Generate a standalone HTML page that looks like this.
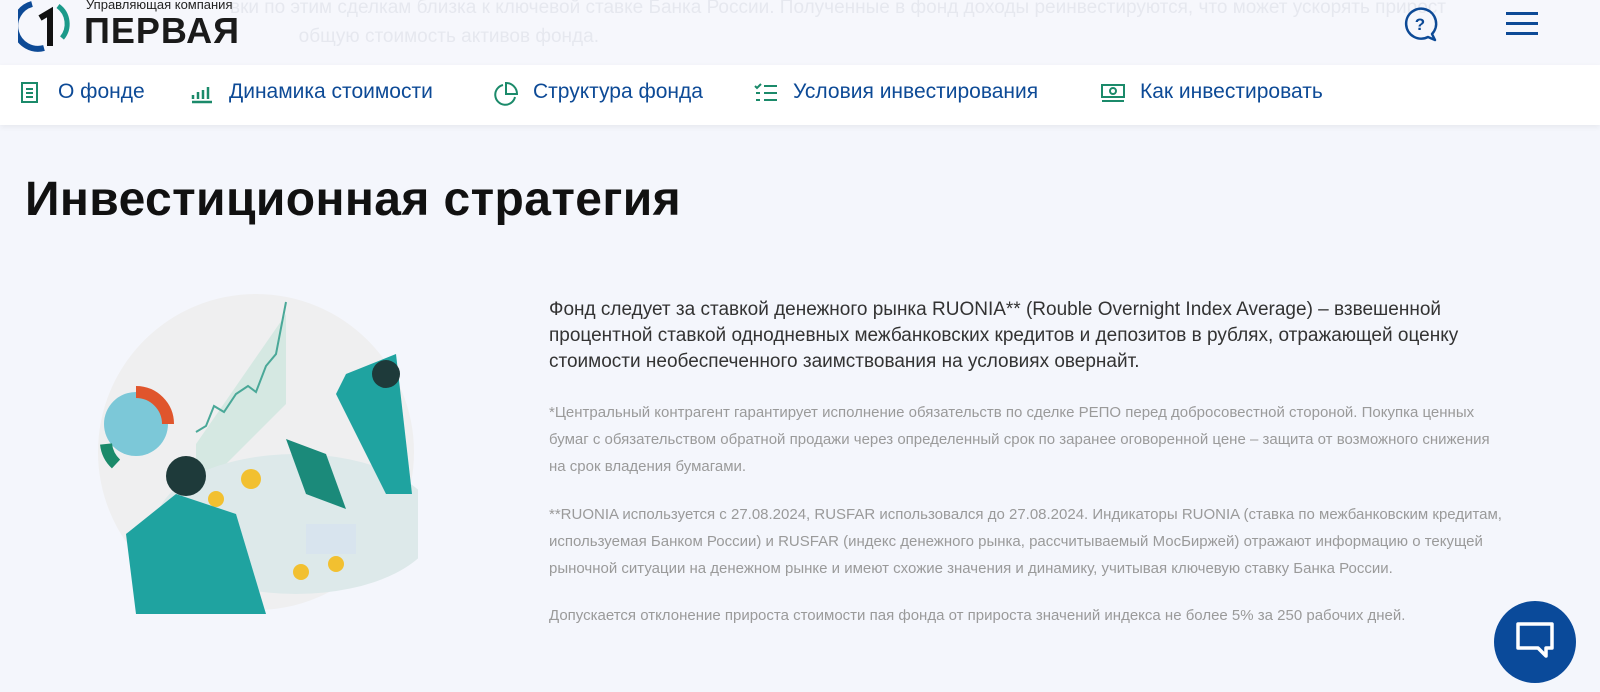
<!DOCTYPE html><html><head><meta charset="utf-8"><style>
*{margin:0;padding:0;box-sizing:border-box}
body{width:1600px;height:692px;overflow:hidden;background:#f4f6fc;font-family:"Liberation Sans","DejaVu Sans",sans-serif;position:relative}
.hdr{position:absolute;left:0;top:0;width:1600px;height:65px;background:#f6f7fc}
.ghost{position:absolute;left:230px;color:#e6e8ef;font-size:19px;white-space:nowrap}
.nav{position:absolute;left:0;top:65px;width:1600px;height:60px;background:#fff;box-shadow:0 2px 6px rgba(0,0,0,.06)}
.nav a{position:absolute;top:15px;font-size:21px;color:#0d4a96;text-decoration:none;white-space:nowrap}
.nav svg{position:absolute;top:17px}
h1{position:absolute;left:25px;top:172px;font-size:48px;font-weight:bold;color:#111;letter-spacing:.4px}
.p1{position:absolute;left:549px;top:297px;width:960px;font-size:19px;line-height:26px;color:#333}
.sm{position:absolute;left:549px;width:990px;font-size:15px;line-height:27px;color:#9a9a9a}
</style></head><body>
<div class="hdr">
<div class="ghost" style="top:-3px">вки по этим сделкам близка к ключевой ставке Банка России. Полученные в фонд доходы реинвестируются, что может ускорять прирост</div>
<div class="ghost" style="top:26px">&nbsp;&nbsp;&nbsp;&nbsp;&nbsp;&nbsp;&nbsp;&nbsp;&nbsp;&nbsp;&nbsp;&nbsp;&nbsp;общую стоимость активов фонда.</div>
<svg style="position:absolute;left:18px;top:0" width="56" height="52" viewBox="0 0 56 52"><path d="M14 4 A22 22 0 0 0 26 48" stroke="#0d4a96" stroke-width="6" fill="none"/><path d="M40 6 A22 22 0 0 1 44 38" stroke="#1b9a8a" stroke-width="5" fill="none"/><path d="M22 18 L32 12 L32 46" stroke="#111" stroke-width="6" fill="none"/></svg>
<div style="position:absolute;left:86px;top:-3px;font-size:13px;color:#222">Управляющая компания</div>
<div style="position:absolute;left:84px;top:10px;font-size:36px;font-weight:bold;color:#1a1a1a;letter-spacing:1px">ПЕРВАЯ</div>
<svg style="position:absolute;left:1402px;top:6px" width="36" height="36" viewBox="0 0 36 36"><path d="M30 28 A15 15 0 1 0 26 31 L33 34 Z" fill="none" stroke="#0d4a96" stroke-width="2.5" stroke-linejoin="round"/><text x="18" y="24" font-size="17" font-weight="bold" fill="#0d4a96" text-anchor="middle" font-family="Liberation Sans">?</text></svg>
<div style="position:absolute;left:1506px;top:12px;width:32px;height:3px;background:#0d4a96;box-shadow:0 10px 0 #0d4a96,0 20px 0 #0d4a96"></div>
</div>
<div class="nav">
<svg style="left:20px" width="20" height="22" viewBox="0 0 20 22"><rect x="2" y="1" width="15" height="19" fill="none" stroke="#1b8a6a" stroke-width="2"/><path d="M6 7h7M6 11h7M6 15h7" stroke="#1b8a6a" stroke-width="2"/></svg><a style="left:58px">О фонде</a>
<svg style="left:190px" width="24" height="22" viewBox="0 0 24 22"><path d="M2 20h20M3 17v-4M8 17v-7M13 17v-9M18 17v-12" stroke="#1b8a6a" stroke-width="2.5" fill="none"/></svg><a style="left:229px">Динамика стоимости</a>
<svg style="left:492px" width="26" height="26" viewBox="0 0 26 26"><path d="M11 3 A10 10 0 1 0 23 15" fill="none" stroke="#1b8a6a" stroke-width="2"/><path d="M14 1v11h11A11 11 0 0 0 14 1z" fill="none" stroke="#1b8a6a" stroke-width="2"/></svg><a style="left:533px">Структура фонда</a>
<svg style="left:754px" width="24" height="22" viewBox="0 0 24 22"><path d="M1 4l2 2 4-4M10 4h13M10 11h13M10 18h13M2 11h4M2 18h4" stroke="#1b8a6a" stroke-width="2" fill="none"/></svg><a style="left:793px">Условия инвестирования</a>
<svg style="left:1100px" width="26" height="22" viewBox="0 0 26 22"><rect x="2" y="3" width="22" height="12" fill="none" stroke="#1b8a6a" stroke-width="2"/><circle cx="13" cy="9" r="3" fill="none" stroke="#1b8a6a" stroke-width="2"/><path d="M2 19h22" stroke="#1b8a6a" stroke-width="2"/></svg><a style="left:1140px">Как инвестировать</a>
</div>
<h1>Инвестиционная стратегия</h1>
<svg style="position:absolute;left:96px;top:294px" width="322" height="320" viewBox="0 0 322 320">
<circle cx="160" cy="158" r="158" fill="#efeff0"/>
<polygon points="100,150 190,20 190,110 100,200" fill="#d5e8e2"/>
<polyline points="100,138 110,132 118,112 128,118 140,100 152,92 160,98 170,72 180,60 190,8" fill="none" stroke="#4aa898" stroke-width="2"/>
<circle cx="40" cy="130" r="32" fill="#7cc8d8"/><path d="M40 98 A32 32 0 0 1 72 130" stroke="#e0552c" stroke-width="12" fill="none"/><path d="M10 150 A32 32 0 0 0 20 170" stroke="#1b8a6a" stroke-width="12" fill="none"/>
<ellipse cx="200" cy="230" rx="140" ry="70" fill="#dde9ea"/>
<polygon points="190,145 230,160 250,215 210,200" fill="#1b8a7a"/>
<rect x="210" y="230" width="50" height="30" fill="#d8e4ee"/>
<circle cx="155" cy="185" r="10" fill="#f2c030"/><circle cx="120" cy="205" r="8" fill="#f2c030"/><circle cx="240" cy="270" r="8" fill="#f2c030"/><circle cx="205" cy="278" r="8" fill="#f2c030"/>
<path d="M30 240 L80 200 L140 220 L170 320 L40 320 Z" fill="#1fa3a0"/><circle cx="90" cy="182" r="20" fill="#1e3a3a"/>
<path d="M250 80 L300 60 L316 200 L290 200 L240 100 Z" fill="#1fa3a0"/><circle cx="290" cy="80" r="14" fill="#1e3a3a"/>
</svg>
<div class="p1">Фонд следует за ставкой денежного рынка RUONIA** (Rouble Overnight Index Average) – взвешенной процентной ставкой однодневных межбанковских кредитов и депозитов в рублях, отражающей оценку стоимости необеспеченного заимствования на условиях овернайт.</div>
<div class="sm" style="top:399px;width:950px">*Центральный контрагент гарантирует исполнение обязательств по сделке РЕПО перед добросовестной стороной. Покупка ценных бумаг с обязательством обратной продажи через определенный срок по заранее оговоренной цене – защита от возможного снижения на срок владения бумагами.</div>
<div class="sm" style="top:501px">**RUONIA используется с 27.08.2024, RUSFAR использовался до 27.08.2024. Индикаторы RUONIA (ставка по межбанковским кредитам, используемая Банком России) и RUSFAR (индекс денежного рынка, рассчитываемый МосБиржей) отражают информацию о текущей рыночной ситуации на денежном рынке и имеют схожие значения и динамику, учитывая ключевую ставку Банка России.</div>
<div class="sm" style="top:602px">Допускается отклонение прироста стоимости пая фонда от прироста значений индекса не более 5% за 250 рабочих дней.</div>
<div style="position:absolute;left:1494px;top:601px;width:82px;height:82px;border-radius:50%;background:#0a4a9a"></div>
<svg style="position:absolute;left:1514px;top:620px" width="42" height="42" viewBox="0 0 42 42"><path d="M4 4h34v24h-6v8l-8-8H4z" fill="none" stroke="#fff" stroke-width="3.5" stroke-linejoin="round"/></svg>
</body></html>
